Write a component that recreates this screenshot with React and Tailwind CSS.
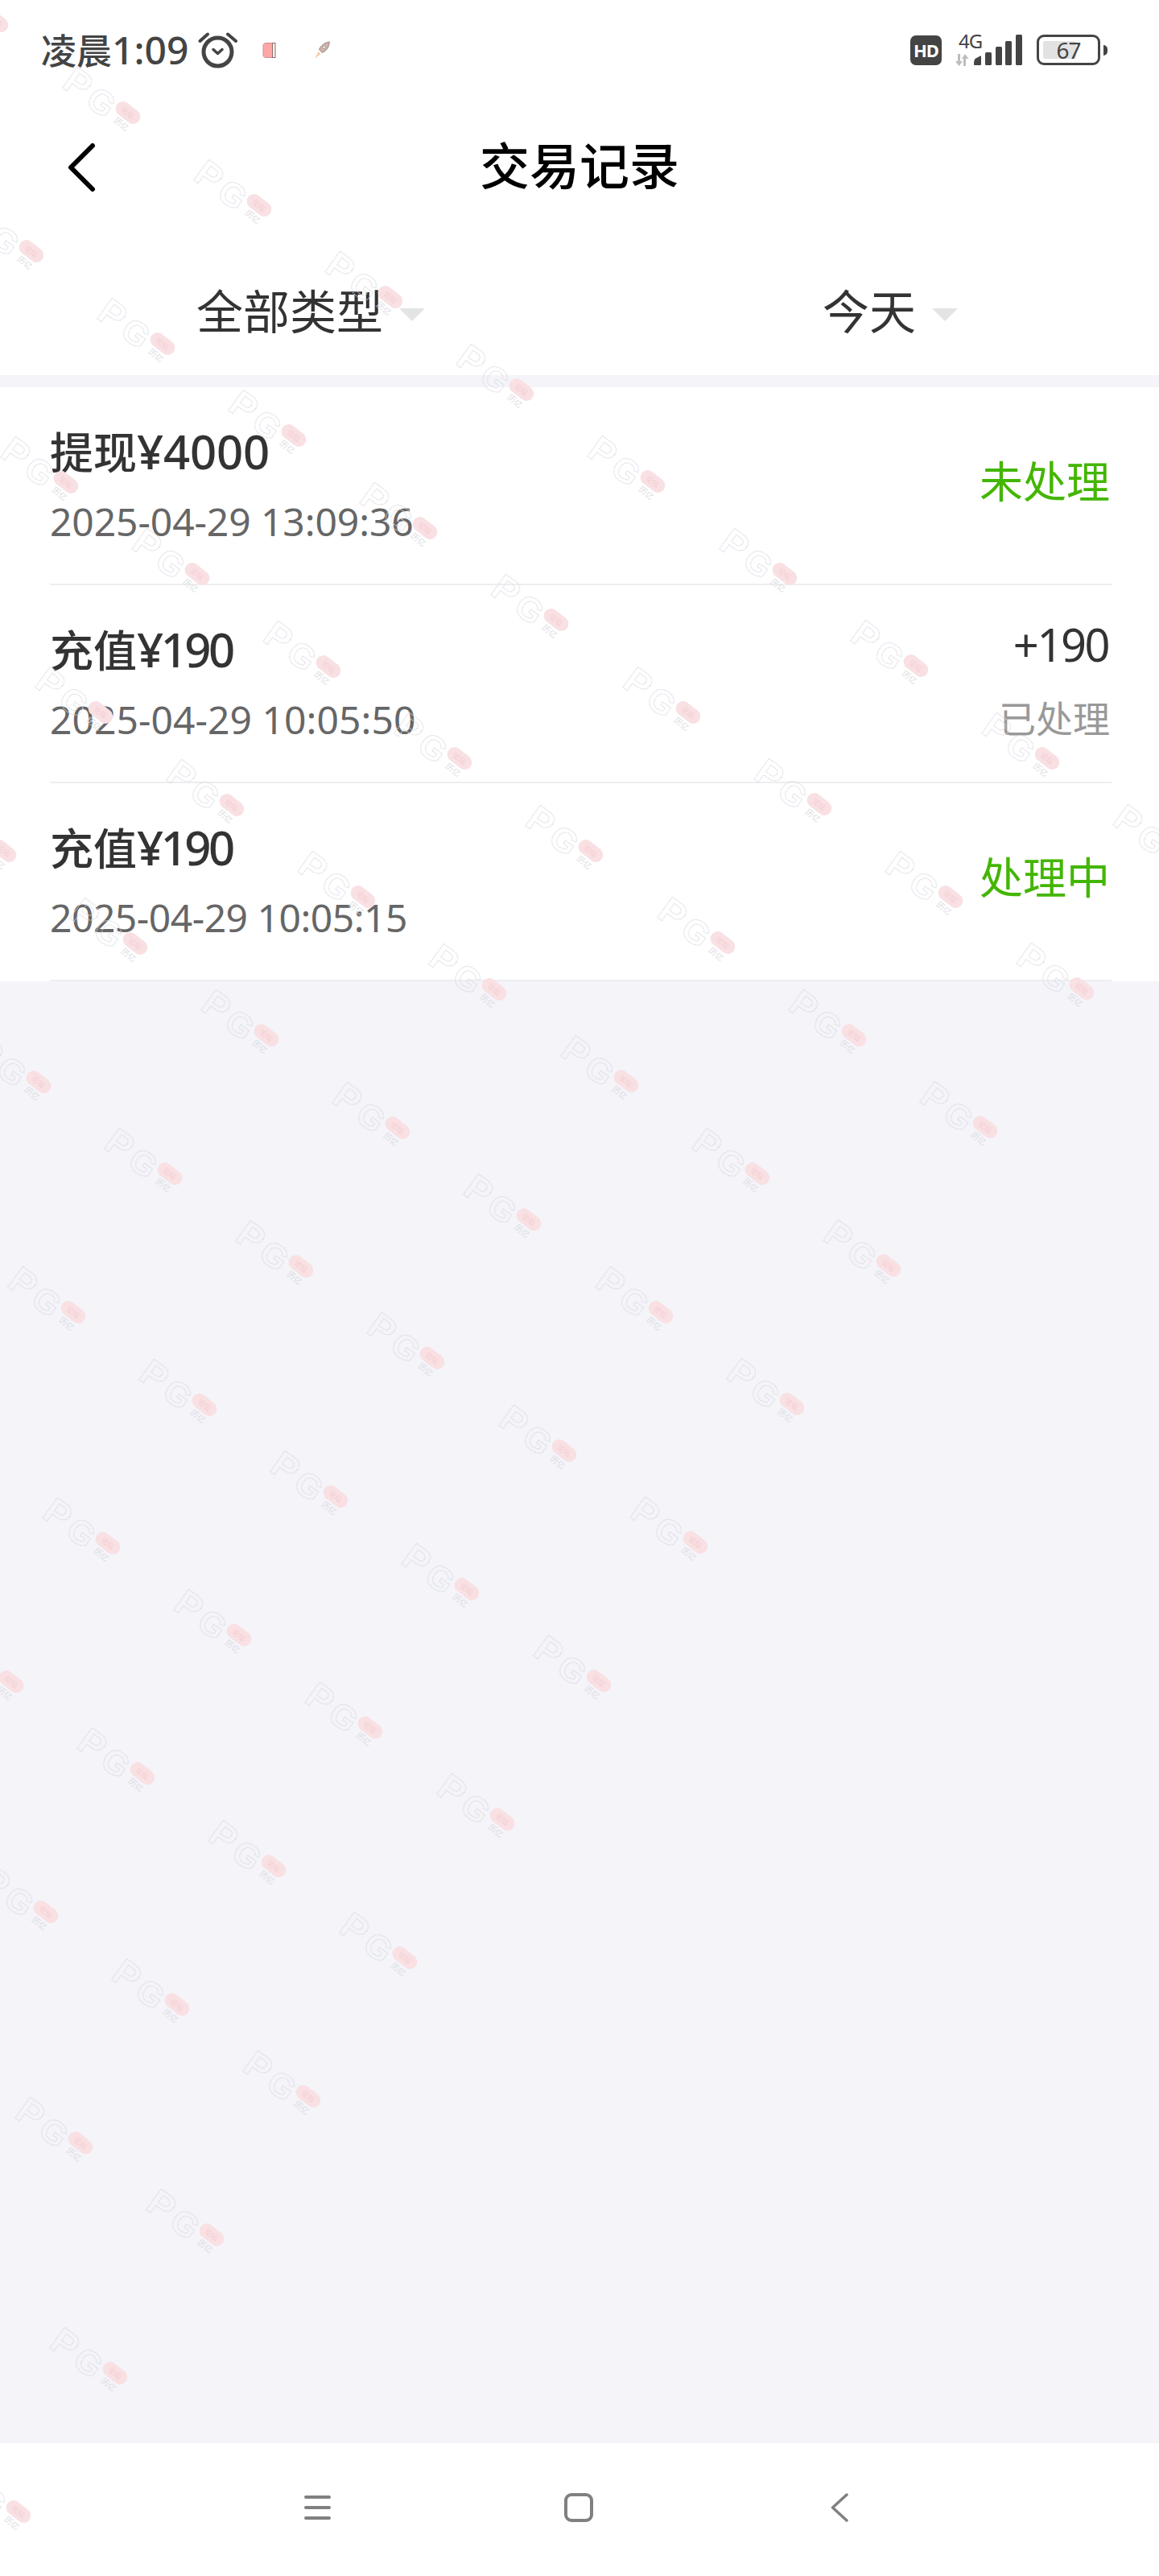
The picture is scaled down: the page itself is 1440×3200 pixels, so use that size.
import React from 'react';

// Watermark lattice, measured off the screenshot (position of each pink pill)
const buildWatermarks = () => {
    const points = [];
    for (let m = -6; m <= 4; m++) {
        for (let n = -4; n <= 9; n++) {
            const x = 331 + 163.2 * m - 120.1 * n;
            const y = 1286 + 114.5 * m + 172 * n;
            if (x > -40 && x < 1530 && y > -10 && y < 3260) points.push({ x, y, key: `${m}_${n}` });
        }
    }
    return points;
};

const Watermark = ({ x, y }) => (
    <svg
        className="absolute"
        style={{ left: x - 110, top: y - 70 }}
        width="140"
        height="110"
        viewBox="0 0 140 110"
    >
        <g fontFamily="'Liberation Sans', sans-serif" fontWeight="700">
            <text
                x="48"
                y="33"
                fontSize="46"
                fill="none"
                stroke="#d9d9df"
                strokeWidth="1"
                strokeDasharray="1.5 1"
                textAnchor="middle"
                dominantBaseline="central"
                transform="rotate(36 48 33)"
            >
                P
            </text>
            <text
                x="77"
                y="57"
                fontSize="42"
                fill="none"
                stroke="#d9d9df"
                strokeWidth="1"
                strokeDasharray="1.5 1"
                textAnchor="middle"
                dominantBaseline="central"
                transform="rotate(36 77 57)"
            >
                G
            </text>
        </g>
        <g transform="rotate(38 110 70)">
            <rect x="93" y="61" width="34" height="18" rx="9" fill="#f9e0e3" />
            <text x="110" y="70" fontSize="9" fill="#f3cdd2" textAnchor="middle" dominantBaseline="central">
                论坛
            </text>
        </g>
        <text
            x="102"
            y="84"
            fontSize="10"
            fill="#dcdce2"
            textAnchor="middle"
            dominantBaseline="central"
            transform="rotate(38 102 84)"
        >
            历亿
        </text>
    </svg>
);

const AlarmIcon = () => (
    <svg className="ml-[12px] shrink-0" width="50" height="46" viewBox="0 0 50 46" fill="none" stroke="#444" strokeLinecap="round">
        <circle cx="24.5" cy="25.5" r="17.5" strokeWidth="5" />
        <path d="M19 22.5l5.5 5 5.500-5" strokeWidth="3.500" strokeLinejoin="round" />
        <path d="M2.500 12L12 3.500M37 3.500L47 12" strokeWidth="4" />
    </svg>
);

const BookIcon = () => (
    <svg className="ml-[30px] shrink-0" width="17" height="21" viewBox="0 0 17 21">
        <path d="M1 3.500L3 1.500H12.500V19.500H3L1 17.500z" fill="#ffa6a6" stroke="#d98d8d" strokeWidth="1" />
        <rect x="12.500" y="1.500" width="3.500" height="18" fill="#fff3ea" stroke="#8a6a6a" strokeWidth="1" />
    </svg>
);

const RocketIcon = () => (
    <svg className="ml-[46px] shrink-0" width="22" height="22" viewBox="0 0 20 20">
        <path d="M18.500 1C13 1.800 8.800 5 6.800 9.500l3.600 3.500C15 11.500 18 7 18.500 1z" fill="#cdb4a9" stroke="#8c7a72" strokeWidth="0.8" />
        <circle cx="12.500" cy="7" r="1.500" fill="#fff" stroke="#8c7a72" strokeWidth="0.6" />
        <path d="M6 12l2.500 2.500L2 19.500z" fill="#f6c8a4" />
    </svg>
);

const SignalIcon = () => (
    <svg className="shrink-0" width="60" height="38" viewBox="0 0 60 38" fill="#444">
        <path d="M0 36.500c0-3 .5-5 1.500-6.500L7 27c1.500-.8 2-.3 2 1v8.500c0 1-.5 1.500-1.500 1.500h-6C.5 38 0 37.500 0 36.500z" />
        <rect x="14" y="22" width="8" height="16" rx="1.500" />
        <rect x="27" y="15" width="8" height="23" rx="1.500" />
        <rect x="39" y="8" width="8" height="30" rx="1.500" />
        <rect x="52" y="0" width="8" height="38" rx="1.500" />
    </svg>
);

const ArrowsIcon = () => (
    <svg className="absolute left-0 bottom-0" width="20" height="15" viewBox="0 0 20 15" fill="#bdbdbd">
        <path d="M4 0h3v9h3l-4.500 6L1 9h3z" />
        <path d="M11 15h3V6h3.500L13 0 9 6h2z" />
    </svg>
);

const StatusBar = () => (
    <div className="flex h-[124px] items-center justify-between pl-[51px] pr-[64px] text-[#444]">
        <div className="flex items-center">
            <span className="text-[44px] font-medium leading-[50px]">
                凌晨<span className="text-[48px]">1:09</span>
            </span>
            <AlarmIcon />
            <BookIcon />
            <RocketIcon />
        </div>
        <div className="flex items-center">
            <div className="flex h-[37px] w-[39px] items-center justify-center rounded-[7px] bg-[#444] text-[22px] font-bold leading-none tracking-[-1px] text-white">
                HD
            </div>
            <div className="relative ml-[16px] h-[40px] w-[24px]">
                <ArrowsIcon />
                <span className="absolute left-[5px] top-[-5px] text-[24px] leading-[28px] tracking-[-1px]">4G</span>
            </div>
            <SignalIcon />
            <div className="relative ml-[18px] flex h-[38px] w-[79px] items-center rounded-[9px] border-[3px] border-[#444] p-[5px]">
                <div className="h-full w-[41px] rounded-[2px] bg-[#e2e2e2]" />
                <span className="absolute inset-0 flex items-center justify-center text-[28px] leading-none tracking-[-1px]">67</span>
            </div>
            <div className="ml-[4px] h-[13px] w-[5px] rounded-r-full bg-[#444]" />
        </div>
    </div>
);

const FilterTab = ({ label }) => (
    <div className="flex flex-1 justify-center pt-[62px]">
        <span className="relative h-[70px] text-[58px] leading-[70px] text-[#333]">
            {label}
            <span className="absolute left-full top-[31px] ml-[20px] h-0 w-0 border-x-[16px] border-t-[16px] border-x-transparent border-t-[#e3e4e6]" />
        </span>
    </div>
);

// Reference figures have a narrow 1, the row's tracking makes up the width
const transactions = [
    { label: '提现', money: '¥4000', moneyClass: 'tracking-[-0.2px]', time: '2025-04-29 13:09:36', timeClass: 'tracking-[-0.1px]', status: '未处理' },
    { label: '充值', money: '¥190', moneyClass: 'tracking-[-3.5px]', time: '2025-04-29 10:05:50', timeClass: 'tracking-[0.05px]', amount: '+190', status: '已处理' },
    { label: '充值', money: '¥190', moneyClass: 'tracking-[-3.5px]', time: '2025-04-29 10:05:15', timeClass: 'tracking-[-0.5px]', status: '处理中' },
];

const TransactionRow = ({ item }) => (
    <div className="ml-[62px] mr-[59px] flex h-[246px] items-center justify-between border-b-2 border-[#eeeef1]">
        <div className="mb-[2px] flex flex-col gap-[27px]">
            <div className="h-[64px] text-[54px] font-medium leading-[64px] text-[#333]">
                {item.label}
                <span className={`text-[58px] ${item.moneyClass}`}>{item.money}</span>
            </div>
            <div className={`text-[48px] leading-[56px] text-[#666] ${item.timeClass}`}>{item.time}</div>
        </div>
        {item.amount ? (
            <div className="mb-[6px] flex flex-col items-end gap-[36px]">
                <div className="pr-[4px] text-[56px] leading-[56px] tracking-[-2.5px] text-[#333]">{item.amount}</div>
                <div className="pr-[2px] text-[46px] leading-[56px] text-[#999]">{item.status}</div>
            </div>
        ) : (
            <div className="mb-[10px] pr-[2px] text-[54px] leading-[64px] text-[#43b600]">{item.status}</div>
        )}
    </div>
);

const NavBar = () => (
    <div className="relative flex h-[165px] items-center bg-white pb-[5px]">
        <div className="ml-[378px] flex w-[33px] flex-col gap-[9px]">
            <div className="h-[4px] rounded-full bg-[#808080]" />
            <div className="h-[4px] rounded-full bg-[#808080]" />
            <div className="h-[4px] rounded-full bg-[#808080]" />
        </div>
        <div className="ml-[290px] h-[36px] w-[36px] rounded-[9px] border-[4px] border-[#808080]" />
        <svg className="ml-[295px]" width="22" height="36" viewBox="0 0 22 36" fill="none" stroke="#808080" strokeWidth="3.500" strokeLinecap="round" strokeLinejoin="round">
            <path d="M20 2L2.500 18 20 34" />
        </svg>
    </div>
);

const App = () => {
    const watermarks = buildWatermarks();

    return (
        <div className="relative flex h-[3200px] w-[1440px] flex-col overflow-hidden bg-[#f4f4f9] font-['Noto_Sans','Noto_Sans_CJK_SC',sans-serif]">
            <div className="bg-white">
                <StatusBar />
                <div className="relative flex h-[166px] items-center justify-center">
                    <svg className="absolute left-[83px] top-[54px]" width="36" height="60" viewBox="0 0 36 60" fill="none" stroke="#000" strokeWidth="6" strokeLinecap="round" strokeLinejoin="round">
                        <path d="M32 3L5 30l27 27" />
                    </svg>
                    <h1 className="mb-[3px] text-[62px] font-medium leading-[70px] text-black">交易记录</h1>
                </div>
                <div className="flex h-[176px]">
                    <FilterTab label="全部类型" />
                    <FilterTab label="今天" />
                </div>
            </div>
            <div className="mt-[15px] bg-white">
                {transactions.map((item) => (
                    <TransactionRow key={item.time} item={item} />
                ))}
            </div>
            <div className="flex-1" />
            <NavBar />

            {/* Watermark sits above everything */}
            <div className="pointer-events-none absolute inset-0 overflow-hidden">
                {watermarks.map((w) => (
                    <Watermark key={w.key} x={w.x} y={w.y} />
                ))}
            </div>
        </div>
    );
};

export default App;
